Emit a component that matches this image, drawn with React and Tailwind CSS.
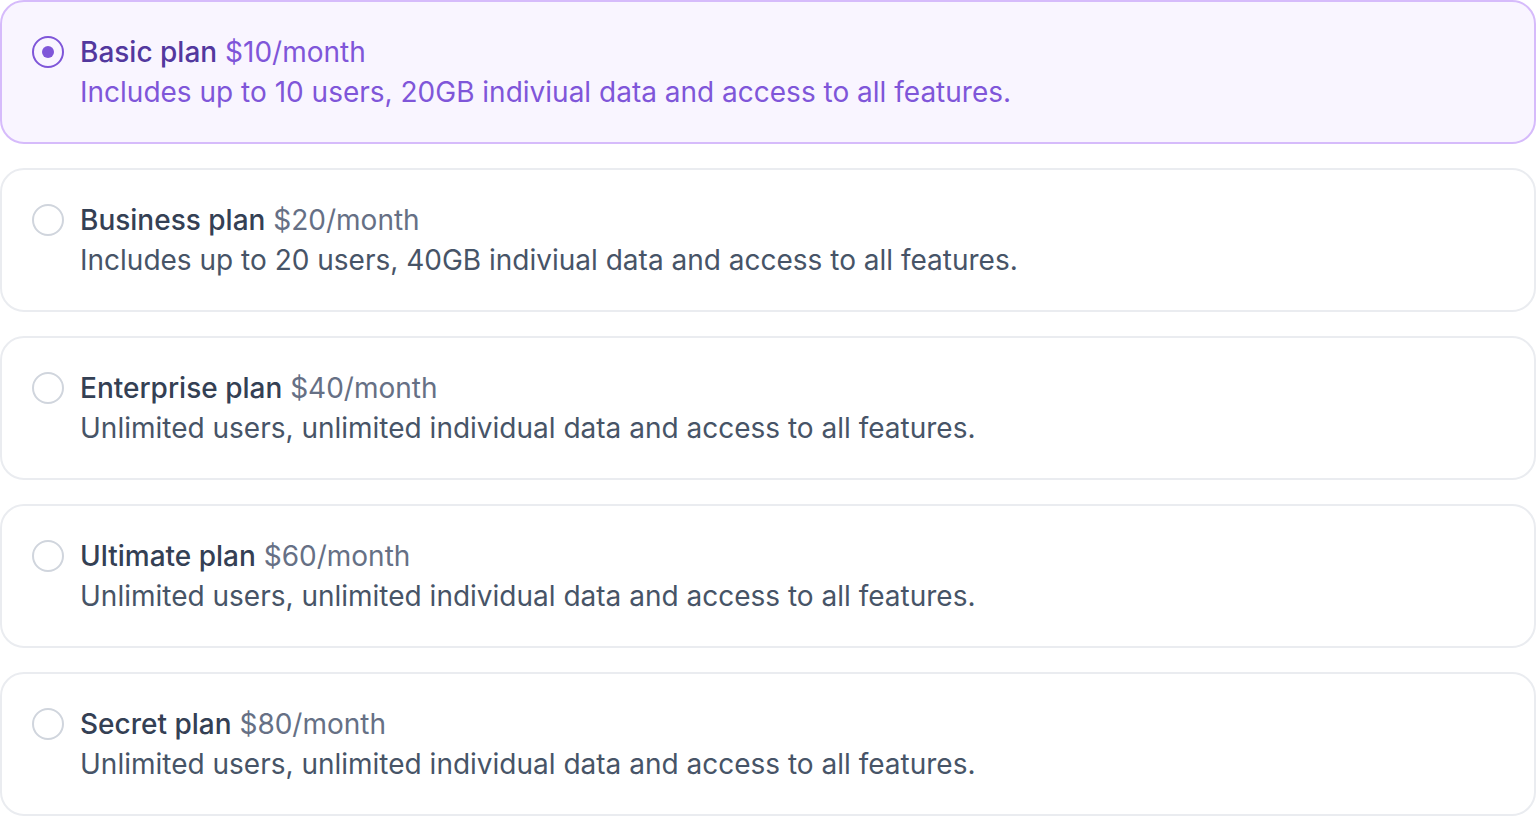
const plans = [
  { id: 'basic', name: 'Basic plan', price: '$10/month', desc: 'Includes up to 10 users, 20GB indiviual data and access to all features.' },
  { id: 'business', name: 'Business plan', price: '$20/month', desc: 'Includes up to 20 users, 40GB indiviual data and access to all features.' },
  { id: 'enterprise', name: 'Enterprise plan', price: '$40/month', desc: 'Unlimited users, unlimited individual data and access to all features.' },
  { id: 'ultimate', name: 'Ultimate plan', price: '$60/month', desc: 'Unlimited users, unlimited individual data and access to all features.' },
  { id: 'secret', name: 'Secret plan', price: '$80/month', desc: 'Unlimited users, unlimited individual data and access to all features.' },
];

const App = () => {
  const selected = 'basic';

  return (
    <div className="w-[1536px] flex flex-col gap-6 bg-white font-['Inter',sans-serif]">
      {plans.map((plan) => {
        const active = plan.id === selected;
        return (
          <div
            key={plan.id}
            className={`flex gap-4 p-[30px] rounded-3xl border-2 ${
              active ? 'bg-[#F9F5FF] border-[#D6BBFB]' : 'bg-white border-[#EAECF0]'
            }`}
          >
            <div className="pt-1">
              <div
                className={`w-8 h-8 rounded-full border-2 flex items-center justify-center ${
                  active ? 'border-[#7F56D9] bg-[#F9F5FF]' : 'border-[#D0D5DD] bg-white'
                }`}
              >
                {active && <div className="w-3 h-3 rounded-full bg-[#7F56D9]" />}
              </div>
            </div>
            <div className="flex flex-col text-[28px] leading-[40px]">
              <div>
                <span className={`font-medium ${active ? 'text-[#53389E]' : 'text-[#344054]'}`}>{plan.name}</span>{' '}
                <span className={active ? 'text-[#7F56D9]' : 'text-[#667085]'}>{plan.price}</span>
              </div>
              <div className={active ? 'text-[#7F56D9]' : 'text-[#475467]'}>{plan.desc}</div>
            </div>
          </div>
        );
      })}
    </div>
  );
};

export default App;
